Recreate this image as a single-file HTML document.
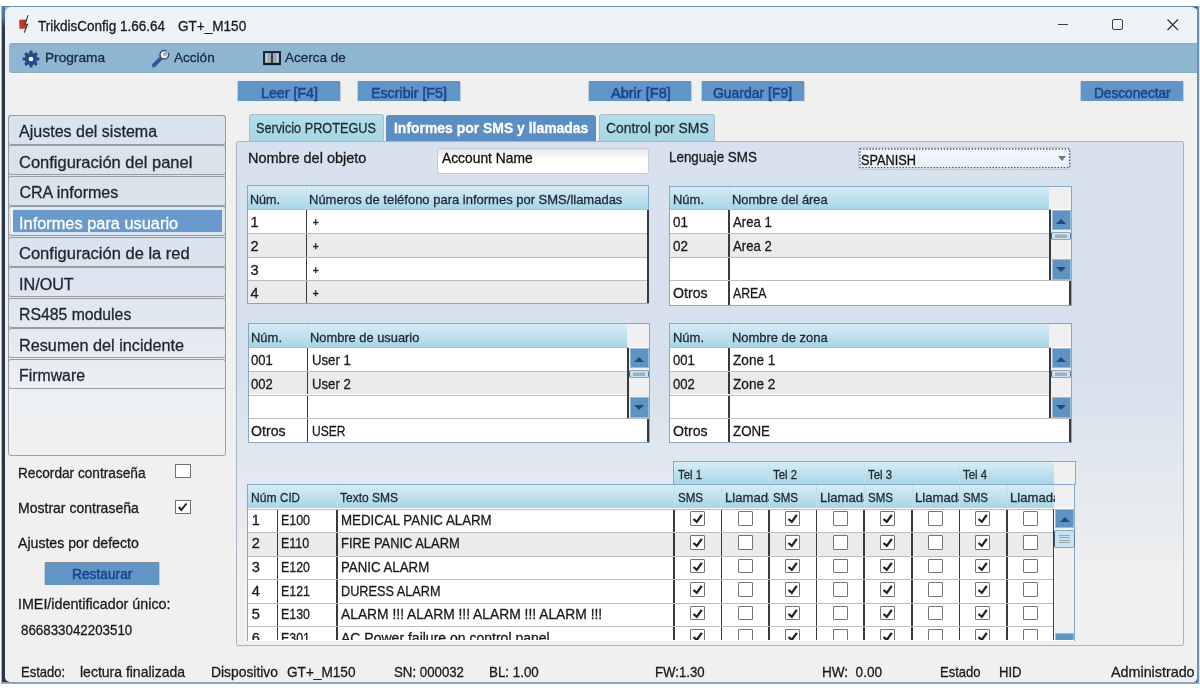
<!DOCTYPE html><html><head><meta charset="utf-8"><style>
html,body{margin:0;padding:0;background:#fff;width:1200px;height:688px;overflow:hidden;}
body{position:relative;font-family:"Liberation Sans",sans-serif;}
.t{position:absolute;white-space:pre;-webkit-text-stroke:0.3px currentColor;}
.b{position:absolute;box-sizing:border-box;}
svg{position:absolute;overflow:visible;}
</style></head><body><div style="position:absolute;left:0;top:0;width:1200px;height:688px;overflow:hidden;filter:blur(0.4px);">
<div class="b" style="left:2.00px;top:6.00px;width:1197.00px;height:678.00px;background:#f0f0f0;"></div>
<div class="b" style="left:5.00px;top:7.00px;width:8.00px;height:8.00px;background:#86b4dc;"></div>
<div class="b" style="left:1190.00px;top:7.00px;width:7.50px;height:7.00px;background:#34475a;"></div>
<div class="b" style="left:5.00px;top:7.00px;width:1192.50px;height:36.50px;background:#eef3f8;border-radius:6px 6px 0 0;"></div>
<div class="b" style="left:2.00px;top:6.00px;width:1197.00px;height:1.00px;background:#6f8fb0;"></div>
<div class="b" style="left:1.00px;top:6.00px;width:1.20px;height:678.00px;background:#9fb6cc;"></div>
<div class="b" style="left:2.00px;top:6.00px;width:3.00px;height:678.00px;background:linear-gradient(#4f7fb0 0px,#4a74a0 12px,#2a3a4e 22px,#27364a 100%);"></div>
<div class="b" style="left:1197.30px;top:6.00px;width:1.30px;height:678.00px;background:#7090b0;"></div>
<div class="b" style="left:1198.60px;top:6.00px;width:1.00px;height:678.00px;background:#cfe6f6;"></div>
<div class="b" style="left:5.00px;top:675.00px;width:6.00px;height:6.60px;background:#27364a;"></div>
<div class="b" style="left:5.00px;top:660.00px;width:35.00px;height:21.60px;background:#f0f0f0;border-radius:0 0 0 5px;"></div>
<div class="b" style="left:1191.00px;top:676.00px;width:6.30px;height:5.60px;background:#34475a;"></div>
<div class="b" style="left:1150.00px;top:660.00px;width:47.30px;height:21.60px;background:#f0f0f0;border-radius:0 0 4px 0;"></div>
<div class="b" style="left:2.00px;top:681.60px;width:1197.00px;height:2.00px;background:#86a6c2;"></div>
<svg style="left:0;top:0" width="40" height="40" viewBox="0 0 40 40"><path d="M19.2 19.8 L26.8 19.6 L25.5 24 L27 24 L25.8 28.8 L19.4 28.8 Z" fill="#c4372d"/><path d="M28 15.2 L25.2 24.2 L27.6 24.2 L24.2 32.8" stroke="#3a3a3a" stroke-width="1.1" fill="none"/></svg>
<div class="t" style="left:38.10px;top:17.73px;font-size:14.00px;line-height:16.09px;color:#1a1a1a;font-weight:normal;transform:scaleX(0.9646);transform-origin:0 0;">TrikdisConfig 1.66.64</div>
<div class="t" style="left:178.30px;top:17.73px;font-size:14.00px;line-height:16.09px;color:#1a1a1a;font-weight:normal;transform:scaleX(0.9685);transform-origin:0 0;">GT+_M150</div>
<div class="b" style="left:1058.00px;top:23.60px;width:10.00px;height:1.20px;background:#3c3c3c;"></div>
<div class="b" style="left:1112.00px;top:19.00px;width:11.00px;height:11.00px;border:1.4px solid #3c3c3c;border-radius:2px;"></div>
<svg style="left:1167px;top:19px" width="12" height="12"><path d="M0.5 0.5 L11 11 M11 0.5 L0.5 11" stroke="#333" stroke-width="1.2"/></svg>
<div class="b" style="left:8.50px;top:43.20px;width:1188.50px;height:29.50px;background:#8fb6d0;border-top:1px solid #86abc4;border-bottom:1px solid #88acc4;border-radius:3px 0 0 3px;"></div>
<div class="b" style="left:5.00px;top:72.70px;width:1192.00px;height:1.30px;background:#f3f5f8;"></div>
<svg style="left:21.8px;top:49.7px" width="18" height="18" viewBox="0 0 18 18"><g fill="#27498a"><circle cx="9" cy="9" r="6.2"/><rect x="7.4" y="0.6" width="3.2" height="4" rx="0.8" transform="rotate(0 9 9)"/><rect x="7.4" y="0.6" width="3.2" height="4" rx="0.8" transform="rotate(45 9 9)"/><rect x="7.4" y="0.6" width="3.2" height="4" rx="0.8" transform="rotate(90 9 9)"/><rect x="7.4" y="0.6" width="3.2" height="4" rx="0.8" transform="rotate(135 9 9)"/><rect x="7.4" y="0.6" width="3.2" height="4" rx="0.8" transform="rotate(180 9 9)"/><rect x="7.4" y="0.6" width="3.2" height="4" rx="0.8" transform="rotate(225 9 9)"/><rect x="7.4" y="0.6" width="3.2" height="4" rx="0.8" transform="rotate(270 9 9)"/><rect x="7.4" y="0.6" width="3.2" height="4" rx="0.8" transform="rotate(315 9 9)"/></g><circle cx="9" cy="9" r="2.3" fill="#fff"/></svg>
<div class="t" style="left:44.60px;top:50.28px;font-size:13.50px;line-height:15.51px;color:#1a2945;font-weight:normal;transform:scaleX(1.0123);transform-origin:0 0;">Programa</div>
<svg style="left:148px;top:46px" width="30" height="24" viewBox="0 0 30 24"><path d="M5.8 19.3 L12.8 12.3" stroke="#2c5aa0" stroke-width="4" stroke-linecap="round"/><circle cx="16.3" cy="8.8" r="4.3" fill="#f4f6f8" stroke="#3b4d60" stroke-width="1.5"/><circle cx="16.8" cy="8.3" r="1.9" fill="#8fb6d0"/><path d="M17 8 L21.5 3.5" stroke="#8fb6d0" stroke-width="3"/></svg>
<div class="t" style="left:174.30px;top:50.28px;font-size:13.50px;line-height:15.51px;color:#1a2945;font-weight:normal;transform:scaleX(1.0045);transform-origin:0 0;">Acción</div>
<svg style="left:258px;top:46px" width="30" height="24" viewBox="0 0 30 24"><rect x="6" y="6" width="16" height="12" fill="#9aa8b0" stroke="#1c2836" stroke-width="2"/><path d="M8.5 8 L8.5 16 M19.5 8 L19.5 16" stroke="#c9d2d8" stroke-width="1.6"/><path d="M14 7 L14 17.5" stroke="#1c2836" stroke-width="1.6"/><path d="M5.5 18 L22.5 18" stroke="#141c26" stroke-width="2.2"/></svg>
<div class="t" style="left:285.00px;top:50.28px;font-size:13.50px;line-height:15.51px;color:#1a2945;font-weight:normal;transform:scaleX(0.9987);transform-origin:0 0;">Acerca de</div>
<div class="b" style="left:237.00px;top:81.00px;width:104.00px;height:21.00px;background:#6095c6;border-top:1.4px solid #7f8c99;border-left:1.2px solid #c4ccd4;border-right:1px solid #c0ccd8;border-bottom:1px solid #e8f0f8;border-radius:2px 2px 0 0;"></div>
<div class="t" style="left:260.50px;top:84.65px;font-size:14.20px;line-height:16.32px;color:#1c4290;font-weight:normal;-webkit-text-stroke:0.5px #1c4290;transform:scaleX(1.0031);transform-origin:0 0;">Leer [F4]</div>
<div class="b" style="left:357.00px;top:81.00px;width:104.00px;height:21.00px;background:#6095c6;border-top:1.4px solid #7f8c99;border-left:1.2px solid #c4ccd4;border-right:1px solid #c0ccd8;border-bottom:1px solid #e8f0f8;border-radius:2px 2px 0 0;"></div>
<div class="t" style="left:370.70px;top:84.65px;font-size:14.20px;line-height:16.32px;color:#1c4290;font-weight:normal;-webkit-text-stroke:0.5px #1c4290;transform:scaleX(1.0034);transform-origin:0 0;">Escribir [F5]</div>
<div class="b" style="left:588.00px;top:81.00px;width:104.00px;height:21.00px;background:#6095c6;border-top:1.4px solid #7f8c99;border-left:1.2px solid #c4ccd4;border-right:1px solid #c0ccd8;border-bottom:1px solid #e8f0f8;border-radius:2px 2px 0 0;"></div>
<div class="t" style="left:610.60px;top:84.65px;font-size:14.20px;line-height:16.32px;color:#1c4290;font-weight:normal;-webkit-text-stroke:0.5px #1c4290;transform:scaleX(1.0242);transform-origin:0 0;">Abrir [F8]</div>
<div class="b" style="left:701.00px;top:81.00px;width:104.00px;height:21.00px;background:#6095c6;border-top:1.4px solid #7f8c99;border-left:1.2px solid #c4ccd4;border-right:1px solid #c0ccd8;border-bottom:1px solid #e8f0f8;border-radius:2px 2px 0 0;"></div>
<div class="t" style="left:713.30px;top:84.65px;font-size:14.20px;line-height:16.32px;color:#1c4290;font-weight:normal;-webkit-text-stroke:0.5px #1c4290;transform:scaleX(0.9840);transform-origin:0 0;">Guardar [F9]</div>
<div class="b" style="left:1080.00px;top:81.00px;width:104.00px;height:21.00px;background:#6095c6;border-top:1.4px solid #7f8c99;border-left:1.2px solid #c4ccd4;border-right:1px solid #c0ccd8;border-bottom:1px solid #e8f0f8;border-radius:2px 2px 0 0;"></div>
<div class="t" style="left:1094.20px;top:84.65px;font-size:14.20px;line-height:16.32px;color:#1c4290;font-weight:normal;-webkit-text-stroke:0.5px #1c4290;transform:scaleX(0.9622);transform-origin:0 0;">Desconectar</div>
<div class="b" style="left:7.80px;top:115.00px;width:218.20px;height:340.80px;border:1.6px solid #a0a0a0;border-radius:3px;background:linear-gradient(#d9e3ee 0px,#dae3ee 150px,#eceff3 270px,#f0f0f0 340px);"></div>
<div class="b" style="left:7.80px;top:114.70px;width:218.20px;height:30.20px;border:1.8px solid #9c9c9c;border-radius:3px;"></div>
<div class="t" style="left:19.40px;top:122.07px;font-size:16.05px;line-height:18.44px;color:#1e2530;font-weight:normal;transform:scaleX(0.9996);transform-origin:0 0;">Ajustes del sistema</div>
<div class="b" style="left:7.80px;top:145.20px;width:218.20px;height:30.20px;border:1.8px solid #9c9c9c;border-radius:3px;"></div>
<div class="t" style="left:19.40px;top:152.57px;font-size:16.05px;line-height:18.44px;color:#1e2530;font-weight:normal;transform:scaleX(1.0289);transform-origin:0 0;">Configuración del panel</div>
<div class="b" style="left:7.80px;top:175.70px;width:218.20px;height:30.20px;border:1.8px solid #9c9c9c;border-radius:3px;"></div>
<div class="t" style="left:19.40px;top:183.07px;font-size:16.05px;line-height:18.44px;color:#1e2530;font-weight:normal;transform:scaleX(1.0000);transform-origin:0 0;">CRA informes</div>
<div class="b" style="left:7.80px;top:206.20px;width:218.20px;height:30.20px;border:1.8px solid #9c9c9c;border-radius:3px;"></div>
<div class="b" style="left:10.50px;top:208.10px;width:212.50px;height:26.00px;border:1px solid #e4ebf3;border-left:2px solid #eef3f8;"></div>
<div class="b" style="left:12.50px;top:209.50px;width:209.00px;height:22.70px;background:#6a9acb;"></div>
<div class="t" style="left:19.40px;top:213.57px;font-size:16.05px;line-height:18.44px;color:#ffffff;font-weight:normal;transform:scaleX(1.0205);transform-origin:0 0;">Informes para usuario</div>
<div class="b" style="left:7.80px;top:236.70px;width:218.20px;height:30.20px;border:1.8px solid #9c9c9c;border-radius:3px;"></div>
<div class="t" style="left:19.40px;top:244.07px;font-size:16.05px;line-height:18.44px;color:#1e2530;font-weight:normal;transform:scaleX(1.0299);transform-origin:0 0;">Configuración de la red</div>
<div class="b" style="left:7.80px;top:267.20px;width:218.20px;height:30.20px;border:1.8px solid #9c9c9c;border-radius:3px;"></div>
<div class="t" style="left:19.40px;top:274.57px;font-size:16.05px;line-height:18.44px;color:#1e2530;font-weight:normal;transform:scaleX(1.0076);transform-origin:0 0;">IN/OUT</div>
<div class="b" style="left:7.80px;top:297.70px;width:218.20px;height:30.20px;border:1.8px solid #9c9c9c;border-radius:3px;"></div>
<div class="t" style="left:19.40px;top:305.07px;font-size:16.05px;line-height:18.44px;color:#1e2530;font-weight:normal;transform:scaleX(0.9843);transform-origin:0 0;">RS485 modules</div>
<div class="b" style="left:7.80px;top:328.20px;width:218.20px;height:30.20px;border:1.8px solid #9c9c9c;border-radius:3px;"></div>
<div class="t" style="left:19.40px;top:335.57px;font-size:16.05px;line-height:18.44px;color:#1e2530;font-weight:normal;transform:scaleX(1.0125);transform-origin:0 0;">Resumen del incidente</div>
<div class="b" style="left:7.80px;top:358.70px;width:218.20px;height:30.20px;border:1.8px solid #9c9c9c;border-radius:3px;"></div>
<div class="t" style="left:19.40px;top:366.07px;font-size:16.05px;line-height:18.44px;color:#1e2530;font-weight:normal;transform:scaleX(0.9885);transform-origin:0 0;">Firmware</div>
<div class="t" style="left:17.50px;top:464.56px;font-size:14.30px;line-height:16.43px;color:#1a1a1a;font-weight:normal;transform:scaleX(0.9549);transform-origin:0 0;">Recordar contraseña</div>
<div class="b" style="left:174.50px;top:464.00px;width:16.00px;height:14.00px;background:#fff;border:1.3px solid #707070;"></div>
<div class="t" style="left:17.50px;top:500.36px;font-size:14.30px;line-height:16.43px;color:#1a1a1a;font-weight:normal;transform:scaleX(0.9807);transform-origin:0 0;">Mostrar contraseña</div>
<div class="b" style="left:174.50px;top:499.50px;width:16.00px;height:14.00px;background:#fff;border:1.3px solid #707070;"></div>
<svg style="left:175px;top:499.5px" width="15" height="14"><path d="M3.8 7 L6.3 10 L11.5 3.5" stroke="#222" stroke-width="2" fill="none"/></svg>
<div class="t" style="left:17.50px;top:534.56px;font-size:14.30px;line-height:16.43px;color:#1a1a1a;font-weight:normal;transform:scaleX(0.9869);transform-origin:0 0;">Ajustes por defecto</div>
<div class="b" style="left:43.80px;top:562.20px;width:116.20px;height:24.10px;background:#6095c6;border-top:1.4px solid #7f8c99;border-left:1.2px solid #c4ccd4;border-right:1px solid #c0ccd8;border-bottom:1px solid #e8f0f8;border-radius:2px 2px 0 0;"></div>
<div class="t" style="left:71.90px;top:566.45px;font-size:14.20px;line-height:16.32px;color:#1c4290;font-weight:normal;-webkit-text-stroke:0.5px #1c4290;transform:scaleX(0.9688);transform-origin:0 0;">Restaurar</div>
<div class="t" style="left:17.50px;top:595.99px;font-size:14.60px;line-height:16.78px;color:#1a1a1a;font-weight:normal;transform:scaleX(0.9788);transform-origin:0 0;">IMEI/identificador único:</div>
<div class="t" style="left:20.50px;top:620.72px;font-size:15.00px;line-height:17.23px;color:#1a1a1a;font-weight:normal;transform:scaleX(0.8887);transform-origin:0 0;">866833042203510</div>
<div class="t" style="left:20.80px;top:663.91px;font-size:14.80px;line-height:17.01px;color:#1a1a1a;font-weight:normal;transform:scaleX(0.8807);transform-origin:0 0;">Estado:</div>
<div class="t" style="left:80.00px;top:663.91px;font-size:14.80px;line-height:17.01px;color:#1a1a1a;font-weight:normal;transform:scaleX(0.9455);transform-origin:0 0;">lectura finalizada</div>
<div class="t" style="left:210.50px;top:663.91px;font-size:14.80px;line-height:17.01px;color:#1a1a1a;font-weight:normal;transform:scaleX(0.9363);transform-origin:0 0;">Dispositivo</div>
<div class="t" style="left:287.00px;top:663.91px;font-size:14.80px;line-height:17.01px;color:#1a1a1a;font-weight:normal;transform:scaleX(0.9202);transform-origin:0 0;">GT+_M150</div>
<div class="t" style="left:393.70px;top:663.91px;font-size:14.80px;line-height:17.01px;color:#1a1a1a;font-weight:normal;transform:scaleX(0.8955);transform-origin:0 0;">SN: 000032</div>
<div class="t" style="left:488.90px;top:663.91px;font-size:14.80px;line-height:17.01px;color:#1a1a1a;font-weight:normal;transform:scaleX(0.9034);transform-origin:0 0;">BL: 1.00</div>
<div class="t" style="left:655.00px;top:663.91px;font-size:14.80px;line-height:17.01px;color:#1a1a1a;font-weight:normal;transform:scaleX(0.8912);transform-origin:0 0;">FW:1.30</div>
<div class="t" style="left:821.70px;top:663.91px;font-size:14.80px;line-height:17.01px;color:#1a1a1a;font-weight:normal;transform:scaleX(0.9157);transform-origin:0 0;">HW:  0.00</div>
<div class="t" style="left:940.30px;top:663.91px;font-size:14.80px;line-height:17.01px;color:#1a1a1a;font-weight:normal;transform:scaleX(0.8790);transform-origin:0 0;">Estado</div>
<div class="t" style="left:999.00px;top:663.91px;font-size:14.80px;line-height:17.01px;color:#1a1a1a;font-weight:normal;transform:scaleX(0.8867);transform-origin:0 0;">HID</div>
<div class="t" style="left:1111.40px;top:663.91px;font-size:14.80px;line-height:17.01px;color:#1a1a1a;font-weight:normal;transform:scaleX(0.9680);transform-origin:0 0;">Administrado</div>
<div class="b" style="left:236.00px;top:140.50px;width:948.00px;height:505.50px;border:1px solid #aab4c0;border-radius:2px;background:linear-gradient(#d8e2ee 0px,#d6e1ed 230px,#f0f0f0 440px);"></div>
<div class="b" style="left:249.00px;top:113.80px;width:135.00px;height:26.80px;background:linear-gradient(#b4dde9,#a8d6e5);border:1px solid #b0bcc6;border-bottom:none;border-radius:3px 3px 0 0;"></div>
<div class="t" style="left:256.00px;top:119.91px;font-size:14.80px;line-height:17.01px;color:#1e2a38;font-weight:normal;transform:scaleX(0.8583);transform-origin:0 0;">Servicio PROTEGUS</div>
<div class="b" style="left:385.60px;top:115.00px;width:210.40px;height:26.00px;background:#5b8fc4;border-radius:3px 3px 0 0;border-top:1px solid #7790a8;"></div>
<div class="t" style="left:394.00px;top:120.36px;font-size:14.30px;line-height:16.43px;color:#ffffff;font-weight:bold;transform:scaleX(0.9741);transform-origin:0 0;">Informes por SMS y llamadas</div>
<div class="b" style="left:599.00px;top:113.80px;width:116.00px;height:26.80px;background:linear-gradient(#b4dde9,#a8d6e5);border:1px solid #b0bcc6;border-bottom:none;border-radius:3px 3px 0 0;"></div>
<div class="t" style="left:605.70px;top:119.91px;font-size:14.80px;line-height:17.01px;color:#1e2a38;font-weight:normal;transform:scaleX(0.9388);transform-origin:0 0;">Control por SMS</div>
<div class="t" style="left:247.50px;top:149.56px;font-size:14.30px;line-height:16.43px;color:#1a1a1a;font-weight:normal;transform:scaleX(1.0133);transform-origin:0 0;">Nombre del objeto</div>
<div class="b" style="left:437.00px;top:148.00px;width:211.50px;height:25.50px;background:linear-gradient(#e4e4e4,#fff 45%);border:1px solid #c8ccd2;border-radius:2px;"></div>
<div class="t" style="left:441.90px;top:149.86px;font-size:14.30px;line-height:16.43px;color:#111;font-weight:normal;transform:scaleX(0.9661);transform-origin:0 0;">Account Name</div>
<div class="t" style="left:668.70px;top:148.56px;font-size:14.30px;line-height:16.43px;color:#1a1a1a;font-weight:normal;transform:scaleX(0.9371);transform-origin:0 0;">Lenguaje SMS</div>
<div class="b" style="left:857.50px;top:147.00px;width:213.50px;height:22.70px;border:1px solid #b8cce0;border-radius:3px;"></div>
<div class="b" style="left:858.50px;top:148.00px;width:211.50px;height:20.70px;background:linear-gradient(#f4f8fc,#e6eef7);border-radius:2px;"></div>
<svg style="left:858.5px;top:148px" width="211.5" height="20.7"><rect x="1" y="1" width="209.5" height="18.7" fill="none" stroke="#555" stroke-width="1.3" stroke-dasharray="1.5 1.6"/></svg>
<div class="t" style="left:860.50px;top:151.88px;font-size:14.50px;line-height:16.66px;color:#111;font-weight:normal;transform:scaleX(0.8788);transform-origin:0 0;">SPANISH</div>
<svg style="left:1058px;top:155.5px" width="9" height="6"><path d="M0 0 L8 0 L4 5 Z" fill="#777"/></svg>
<div class="b" style="left:246.80px;top:185.30px;width:402.70px;height:118.90px;background:#fff;border:1px solid #86a9c8;"></div>
<div class="b" style="left:247.80px;top:186.30px;width:400.70px;height:22.90px;background:linear-gradient(#d6edf5,#a8d5e5);"></div>
<div class="t" style="left:250.30px;top:192.80px;font-size:12.60px;line-height:14.48px;color:#1e2838;font-weight:normal;transform:scaleX(0.9966);transform-origin:0 0;">Núm.</div>
<div class="t" style="left:309.20px;top:192.80px;font-size:12.60px;line-height:14.48px;color:#1e2838;font-weight:normal;transform:scaleX(1.0315);transform-origin:0 0;">Números de teléfono para informes por SMS/llamadas</div>
<div class="b" style="left:306.20px;top:186.30px;width:1.00px;height:22.90px;background:#c2e0ea;"></div>
<div class="b" style="left:247.80px;top:209.20px;width:400.70px;height:24.10px;background:#ffffff;border-top:1.5px solid #bdbdbd;"></div>
<div class="b" style="left:305.70px;top:210.20px;width:1.50px;height:23.10px;background:#3a3a3a;"></div>
<div class="t" style="left:250.60px;top:213.99px;font-size:14.60px;line-height:16.78px;color:#1a1a1a;font-weight:normal;">1</div>
<div class="t" style="left:312.70px;top:217.35px;font-size:10.00px;line-height:11.49px;color:#1a1a1a;font-weight:normal;-webkit-text-stroke:0.5px #222;">+</div>
<div class="b" style="left:247.80px;top:233.30px;width:400.70px;height:23.50px;background:#ebebeb;border-top:1.5px solid #bdbdbd;"></div>
<div class="b" style="left:305.70px;top:234.30px;width:1.50px;height:22.50px;background:#3a3a3a;"></div>
<div class="t" style="left:250.60px;top:238.09px;font-size:14.60px;line-height:16.78px;color:#1a1a1a;font-weight:normal;">2</div>
<div class="t" style="left:312.70px;top:241.45px;font-size:10.00px;line-height:11.49px;color:#1a1a1a;font-weight:normal;-webkit-text-stroke:0.5px #222;">+</div>
<div class="b" style="left:247.80px;top:256.80px;width:400.70px;height:23.50px;background:#ffffff;border-top:1.5px solid #bdbdbd;"></div>
<div class="b" style="left:305.70px;top:257.80px;width:1.50px;height:22.50px;background:#3a3a3a;"></div>
<div class="t" style="left:250.60px;top:261.59px;font-size:14.60px;line-height:16.78px;color:#1a1a1a;font-weight:normal;">3</div>
<div class="t" style="left:312.70px;top:264.95px;font-size:10.00px;line-height:11.49px;color:#1a1a1a;font-weight:normal;-webkit-text-stroke:0.5px #222;">+</div>
<div class="b" style="left:247.80px;top:280.30px;width:400.70px;height:22.90px;background:#ebebeb;border-top:1.5px solid #bdbdbd;"></div>
<div class="b" style="left:305.70px;top:281.30px;width:1.50px;height:21.90px;background:#3a3a3a;"></div>
<div class="t" style="left:250.60px;top:285.09px;font-size:14.60px;line-height:16.78px;color:#1a1a1a;font-weight:normal;">4</div>
<div class="t" style="left:312.70px;top:288.45px;font-size:10.00px;line-height:11.49px;color:#1a1a1a;font-weight:normal;-webkit-text-stroke:0.5px #222;">+</div>
<div class="b" style="left:647.00px;top:210.20px;width:1.50px;height:93.00px;background:#3a3a3a;"></div>
<div class="b" style="left:669.00px;top:185.50px;width:402.50px;height:120.10px;background:#fff;border:1px solid #86a9c8;"></div>
<div class="b" style="left:670.00px;top:186.50px;width:378.50px;height:22.90px;background:linear-gradient(#d6edf5,#a8d5e5);"></div>
<div class="b" style="left:1048.50px;top:186.50px;width:22.00px;height:22.90px;background:#f0f0f0;"></div>
<div class="t" style="left:672.50px;top:193.00px;font-size:12.60px;line-height:14.48px;color:#1e2838;font-weight:normal;transform:scaleX(1.0298);transform-origin:0 0;">Núm.</div>
<div class="t" style="left:731.70px;top:193.00px;font-size:12.60px;line-height:14.48px;color:#1e2838;font-weight:normal;transform:scaleX(1.0198);transform-origin:0 0;">Nombre del área</div>
<div class="b" style="left:728.70px;top:186.50px;width:1.00px;height:22.90px;background:#c2e0ea;"></div>
<div class="b" style="left:670.00px;top:209.40px;width:380.50px;height:23.90px;background:#ffffff;border-top:1.5px solid #bdbdbd;"></div>
<div class="b" style="left:728.20px;top:210.40px;width:1.50px;height:22.90px;background:#3a3a3a;"></div>
<div class="t" style="left:672.80px;top:214.19px;font-size:14.60px;line-height:16.78px;color:#1a1a1a;font-weight:normal;transform:scaleX(0.9238);transform-origin:0 0;">01</div>
<div class="t" style="left:733.00px;top:214.19px;font-size:14.60px;line-height:16.78px;color:#1a1a1a;font-weight:normal;transform:scaleX(0.8997);transform-origin:0 0;">Area 1</div>
<div class="b" style="left:670.00px;top:233.30px;width:380.50px;height:23.50px;background:#ebebeb;border-top:1.5px solid #bdbdbd;"></div>
<div class="b" style="left:728.20px;top:234.30px;width:1.50px;height:22.50px;background:#3a3a3a;"></div>
<div class="t" style="left:672.80px;top:238.09px;font-size:14.60px;line-height:16.78px;color:#1a1a1a;font-weight:normal;transform:scaleX(0.9238);transform-origin:0 0;">02</div>
<div class="t" style="left:733.00px;top:238.09px;font-size:14.60px;line-height:16.78px;color:#1a1a1a;font-weight:normal;transform:scaleX(0.8997);transform-origin:0 0;">Area 2</div>
<div class="b" style="left:670.00px;top:256.80px;width:380.50px;height:23.50px;background:#ffffff;border-top:1.5px solid #bdbdbd;"></div>
<div class="b" style="left:728.20px;top:257.80px;width:1.50px;height:22.50px;background:#3a3a3a;"></div>
<div class="b" style="left:670.00px;top:280.30px;width:400.50px;height:24.30px;background:#ffffff;border-top:1.5px solid #bdbdbd;"></div>
<div class="b" style="left:728.20px;top:281.30px;width:1.50px;height:23.30px;background:#3a3a3a;"></div>
<div class="t" style="left:672.80px;top:285.09px;font-size:14.60px;line-height:16.78px;color:#1a1a1a;font-weight:normal;transform:scaleX(0.9694);transform-origin:0 0;">Otros</div>
<div class="t" style="left:733.00px;top:285.09px;font-size:14.60px;line-height:16.78px;color:#1a1a1a;font-weight:normal;transform:scaleX(0.8375);transform-origin:0 0;">AREA</div>
<div class="b" style="left:1049.00px;top:210.40px;width:1.50px;height:69.90px;background:#3a3a3a;"></div>
<div class="b" style="left:1069.00px;top:281.30px;width:1.50px;height:23.30px;background:#3a3a3a;"></div>
<div class="b" style="left:247.50px;top:323.40px;width:402.00px;height:119.40px;background:#fff;border:1px solid #86a9c8;"></div>
<div class="b" style="left:248.50px;top:324.40px;width:378.00px;height:22.90px;background:linear-gradient(#d6edf5,#a8d5e5);"></div>
<div class="b" style="left:626.50px;top:324.40px;width:22.00px;height:22.90px;background:#f0f0f0;"></div>
<div class="t" style="left:251.00px;top:330.90px;font-size:12.60px;line-height:14.48px;color:#1e2838;font-weight:normal;transform:scaleX(1.0298);transform-origin:0 0;">Núm.</div>
<div class="t" style="left:310.20px;top:330.90px;font-size:12.60px;line-height:14.48px;color:#1e2838;font-weight:normal;transform:scaleX(1.0210);transform-origin:0 0;">Nombre de usuario</div>
<div class="b" style="left:307.20px;top:324.40px;width:1.00px;height:22.90px;background:#c2e0ea;"></div>
<div class="b" style="left:248.50px;top:347.30px;width:380.00px;height:23.60px;background:#ffffff;border-top:1.5px solid #bdbdbd;"></div>
<div class="b" style="left:306.70px;top:348.30px;width:1.50px;height:22.60px;background:#3a3a3a;"></div>
<div class="t" style="left:251.30px;top:352.09px;font-size:14.60px;line-height:16.78px;color:#1a1a1a;font-weight:normal;transform:scaleX(0.8950);transform-origin:0 0;">001</div>
<div class="t" style="left:311.50px;top:352.09px;font-size:14.60px;line-height:16.78px;color:#1a1a1a;font-weight:normal;transform:scaleX(0.9023);transform-origin:0 0;">User 1</div>
<div class="b" style="left:248.50px;top:370.90px;width:380.00px;height:23.60px;background:#ebebeb;border-top:1.5px solid #bdbdbd;"></div>
<div class="b" style="left:306.70px;top:371.90px;width:1.50px;height:22.60px;background:#3a3a3a;"></div>
<div class="t" style="left:251.30px;top:375.69px;font-size:14.60px;line-height:16.78px;color:#1a1a1a;font-weight:normal;transform:scaleX(0.8950);transform-origin:0 0;">002</div>
<div class="t" style="left:311.50px;top:375.69px;font-size:14.60px;line-height:16.78px;color:#1a1a1a;font-weight:normal;transform:scaleX(0.9023);transform-origin:0 0;">User 2</div>
<div class="b" style="left:248.50px;top:394.50px;width:380.00px;height:23.70px;background:#ffffff;border-top:1.5px solid #bdbdbd;"></div>
<div class="b" style="left:306.70px;top:395.50px;width:1.50px;height:22.70px;background:#3a3a3a;"></div>
<div class="b" style="left:248.50px;top:418.20px;width:400.00px;height:23.60px;background:#ffffff;border-top:1.5px solid #bdbdbd;"></div>
<div class="b" style="left:306.70px;top:419.20px;width:1.50px;height:22.60px;background:#3a3a3a;"></div>
<div class="t" style="left:251.30px;top:422.99px;font-size:14.60px;line-height:16.78px;color:#1a1a1a;font-weight:normal;transform:scaleX(0.9694);transform-origin:0 0;">Otros</div>
<div class="t" style="left:311.50px;top:422.99px;font-size:14.60px;line-height:16.78px;color:#1a1a1a;font-weight:normal;transform:scaleX(0.8234);transform-origin:0 0;">USER</div>
<div class="b" style="left:627.00px;top:348.30px;width:1.50px;height:69.90px;background:#3a3a3a;"></div>
<div class="b" style="left:647.00px;top:419.20px;width:1.50px;height:22.60px;background:#3a3a3a;"></div>
<div class="b" style="left:669.00px;top:323.40px;width:402.50px;height:119.40px;background:#fff;border:1px solid #86a9c8;"></div>
<div class="b" style="left:670.00px;top:324.40px;width:378.50px;height:22.90px;background:linear-gradient(#d6edf5,#a8d5e5);"></div>
<div class="b" style="left:1048.50px;top:324.40px;width:22.00px;height:22.90px;background:#f0f0f0;"></div>
<div class="t" style="left:672.50px;top:330.90px;font-size:12.60px;line-height:14.48px;color:#1e2838;font-weight:normal;transform:scaleX(1.0298);transform-origin:0 0;">Núm.</div>
<div class="t" style="left:731.90px;top:330.90px;font-size:12.60px;line-height:14.48px;color:#1e2838;font-weight:normal;transform:scaleX(1.0274);transform-origin:0 0;">Nombre de zona</div>
<div class="b" style="left:728.90px;top:324.40px;width:1.00px;height:22.90px;background:#c2e0ea;"></div>
<div class="b" style="left:670.00px;top:347.30px;width:380.50px;height:23.60px;background:#ffffff;border-top:1.5px solid #bdbdbd;"></div>
<div class="b" style="left:728.40px;top:348.30px;width:1.50px;height:22.60px;background:#3a3a3a;"></div>
<div class="t" style="left:672.80px;top:352.09px;font-size:14.60px;line-height:16.78px;color:#1a1a1a;font-weight:normal;transform:scaleX(0.8950);transform-origin:0 0;">001</div>
<div class="t" style="left:733.20px;top:352.09px;font-size:14.60px;line-height:16.78px;color:#1a1a1a;font-weight:normal;transform:scaleX(0.9329);transform-origin:0 0;">Zone 1</div>
<div class="b" style="left:670.00px;top:370.90px;width:380.50px;height:23.60px;background:#ebebeb;border-top:1.5px solid #bdbdbd;"></div>
<div class="b" style="left:728.40px;top:371.90px;width:1.50px;height:22.60px;background:#3a3a3a;"></div>
<div class="t" style="left:672.80px;top:375.69px;font-size:14.60px;line-height:16.78px;color:#1a1a1a;font-weight:normal;transform:scaleX(0.8950);transform-origin:0 0;">002</div>
<div class="t" style="left:733.20px;top:375.69px;font-size:14.60px;line-height:16.78px;color:#1a1a1a;font-weight:normal;transform:scaleX(0.9329);transform-origin:0 0;">Zone 2</div>
<div class="b" style="left:670.00px;top:394.50px;width:380.50px;height:23.70px;background:#ffffff;border-top:1.5px solid #bdbdbd;"></div>
<div class="b" style="left:728.40px;top:395.50px;width:1.50px;height:22.70px;background:#3a3a3a;"></div>
<div class="b" style="left:670.00px;top:418.20px;width:400.50px;height:23.60px;background:#ffffff;border-top:1.5px solid #bdbdbd;"></div>
<div class="b" style="left:728.40px;top:419.20px;width:1.50px;height:22.60px;background:#3a3a3a;"></div>
<div class="t" style="left:672.80px;top:422.99px;font-size:14.60px;line-height:16.78px;color:#1a1a1a;font-weight:normal;transform:scaleX(0.9694);transform-origin:0 0;">Otros</div>
<div class="t" style="left:733.20px;top:422.99px;font-size:14.60px;line-height:16.78px;color:#1a1a1a;font-weight:normal;transform:scaleX(0.9123);transform-origin:0 0;">ZONE</div>
<div class="b" style="left:1049.00px;top:348.30px;width:1.50px;height:69.90px;background:#3a3a3a;"></div>
<div class="b" style="left:1069.00px;top:419.20px;width:1.50px;height:22.60px;background:#3a3a3a;"></div>
<div class="b" style="left:1050.50px;top:210.20px;width:20.00px;height:69.40px;background:#f0f0f0;"></div>
<div class="b" style="left:1051.50px;top:210.20px;width:19.00px;height:20.00px;background:#5f93c4;border:1px solid #9dbcd8;"></div>
<svg style="left:1056.00px;top:218.70px" width="10" height="5"><path d="M0 5 L5 0 L10 5 Z" fill="#2b4874"/></svg>
<div class="b" style="left:1050.50px;top:232.30px;width:20.50px;height:7.70px;background:#c9e2f2;border:1px solid #86a8c8;border-left:1.5px solid #3d5f86;border-right:1.5px solid #5d7fa6;border-radius:2px;"></div>
<div class="b" style="left:1055.00px;top:234.30px;width:11.50px;height:3.70px;background:#a3aeb8;border-top:1px solid #c0c8cf;"></div>
<div class="b" style="left:1051.50px;top:259.10px;width:19.00px;height:20.50px;background:#5f93c4;border:1px solid #9dbcd8;"></div>
<svg style="left:1056.00px;top:267.35px" width="10" height="5"><path d="M0 0 L5 5 L10 0 Z" fill="#2b4874"/></svg>
<div class="b" style="left:628.50px;top:348.00px;width:20.00px;height:69.50px;background:#f0f0f0;"></div>
<div class="b" style="left:629.50px;top:348.00px;width:19.00px;height:20.00px;background:#5f93c4;border:1px solid #9dbcd8;"></div>
<svg style="left:634.00px;top:356.50px" width="10" height="5"><path d="M0 5 L5 0 L10 5 Z" fill="#2b4874"/></svg>
<div class="b" style="left:628.50px;top:370.30px;width:20.50px;height:7.70px;background:#c9e2f2;border:1px solid #86a8c8;border-left:1.5px solid #3d5f86;border-right:1.5px solid #5d7fa6;border-radius:2px;"></div>
<div class="b" style="left:633.00px;top:372.30px;width:11.50px;height:3.70px;background:#a3aeb8;border-top:1px solid #c0c8cf;"></div>
<div class="b" style="left:629.50px;top:397.00px;width:19.00px;height:20.50px;background:#5f93c4;border:1px solid #9dbcd8;"></div>
<svg style="left:634.00px;top:405.25px" width="10" height="5"><path d="M0 0 L5 5 L10 0 Z" fill="#2b4874"/></svg>
<div class="b" style="left:1050.50px;top:348.00px;width:20.00px;height:69.50px;background:#f0f0f0;"></div>
<div class="b" style="left:1051.50px;top:348.00px;width:19.00px;height:20.00px;background:#5f93c4;border:1px solid #9dbcd8;"></div>
<svg style="left:1056.00px;top:356.50px" width="10" height="5"><path d="M0 5 L5 0 L10 5 Z" fill="#2b4874"/></svg>
<div class="b" style="left:1050.50px;top:370.30px;width:20.50px;height:7.70px;background:#c9e2f2;border:1px solid #86a8c8;border-left:1.5px solid #3d5f86;border-right:1.5px solid #5d7fa6;border-radius:2px;"></div>
<div class="b" style="left:1055.00px;top:372.30px;width:11.50px;height:3.70px;background:#a3aeb8;border-top:1px solid #c0c8cf;"></div>
<div class="b" style="left:1051.50px;top:397.00px;width:19.00px;height:20.50px;background:#5f93c4;border:1px solid #9dbcd8;"></div>
<svg style="left:1056.00px;top:405.25px" width="10" height="5"><path d="M0 0 L5 5 L10 0 Z" fill="#2b4874"/></svg>
<div class="b" style="left:673.00px;top:460.80px;width:402.50px;height:24.20px;border:1px solid #86a9c8;border-bottom:none;background:#f0f0f0;"></div>
<div class="b" style="left:674.00px;top:461.80px;width:379.70px;height:22.70px;background:linear-gradient(#d6edf5,#a8d5e5);"></div>
<div class="t" style="left:677.80px;top:467.70px;font-size:12.60px;line-height:14.48px;color:#1e2838;font-weight:normal;transform:scaleX(0.9018);transform-origin:0 0;">Tel 1</div>
<div class="b" style="left:768.90px;top:461.80px;width:1.00px;height:22.50px;background:#c2e0ea;"></div>
<div class="t" style="left:772.90px;top:467.70px;font-size:12.60px;line-height:14.48px;color:#1e2838;font-weight:normal;transform:scaleX(0.9018);transform-origin:0 0;">Tel 2</div>
<div class="b" style="left:864.00px;top:461.80px;width:1.00px;height:22.50px;background:#c2e0ea;"></div>
<div class="t" style="left:868.00px;top:467.70px;font-size:12.60px;line-height:14.48px;color:#1e2838;font-weight:normal;transform:scaleX(0.9018);transform-origin:0 0;">Tel 3</div>
<div class="b" style="left:959.10px;top:461.80px;width:1.00px;height:22.50px;background:#c2e0ea;"></div>
<div class="t" style="left:963.10px;top:467.70px;font-size:12.60px;line-height:14.48px;color:#1e2838;font-weight:normal;transform:scaleX(0.9018);transform-origin:0 0;">Tel 4</div>
<div class="b" style="left:247.20px;top:484.30px;width:828.30px;height:156.70px;background:#fff;border:1px solid #86a9c8;border-bottom:none;"></div>
<div class="b" style="left:248.20px;top:485.30px;width:805.50px;height:23.20px;background:linear-gradient(#d6edf5,#a8d5e5);"></div>
<div class="b" style="left:673.00px;top:484.30px;width:402.50px;height:1.00px;background:#86a9c8;"></div>
<div class="b" style="left:1053.70px;top:485.30px;width:20.80px;height:23.20px;background:#f0f0f0;"></div>
<div class="t" style="left:250.90px;top:491.40px;font-size:12.60px;line-height:14.48px;color:#1e2838;font-weight:normal;transform:scaleX(0.9586);transform-origin:0 0;">Núm</div>
<div class="t" style="left:280.40px;top:491.40px;font-size:12.60px;line-height:14.48px;color:#1e2838;font-weight:normal;transform:scaleX(0.9217);transform-origin:0 0;">CID</div>
<div class="t" style="left:339.90px;top:491.40px;font-size:12.60px;line-height:14.48px;color:#1e2838;font-weight:normal;transform:scaleX(0.9521);transform-origin:0 0;">Texto SMS</div>
<div class="t" style="left:677.50px;top:491.40px;font-size:12.60px;line-height:14.48px;color:#1e2838;font-weight:normal;transform:scaleX(0.9156);transform-origin:0 0;">SMS</div>
<div class="b" style="left:722.85px;top:490px;width:45.05px;height:18px;overflow:hidden;"></div>
<div style="position:absolute;left:723.35px;top:488px;width:46.05px;height:18px;overflow:hidden;"><div class="t" style="left:1.5px;top:3.40px;font-size:12.6px;line-height:14.48px;color:#1e2838;transform:scaleX(1.0406);transform-origin:0 0;">Llamada</div></div>
<div class="t" style="left:772.60px;top:491.40px;font-size:12.60px;line-height:14.48px;color:#1e2838;font-weight:normal;transform:scaleX(0.9156);transform-origin:0 0;">SMS</div>
<div class="b" style="left:817.95px;top:490px;width:45.05px;height:18px;overflow:hidden;"></div>
<div style="position:absolute;left:818.45px;top:488px;width:46.05px;height:18px;overflow:hidden;"><div class="t" style="left:1.5px;top:3.40px;font-size:12.6px;line-height:14.48px;color:#1e2838;transform:scaleX(1.0406);transform-origin:0 0;">Llamada</div></div>
<div class="t" style="left:867.70px;top:491.40px;font-size:12.60px;line-height:14.48px;color:#1e2838;font-weight:normal;transform:scaleX(0.9156);transform-origin:0 0;">SMS</div>
<div class="b" style="left:913.05px;top:490px;width:45.05px;height:18px;overflow:hidden;"></div>
<div style="position:absolute;left:913.55px;top:488px;width:46.05px;height:18px;overflow:hidden;"><div class="t" style="left:1.5px;top:3.40px;font-size:12.6px;line-height:14.48px;color:#1e2838;transform:scaleX(1.0406);transform-origin:0 0;">Llamada</div></div>
<div class="t" style="left:962.80px;top:491.40px;font-size:12.60px;line-height:14.48px;color:#1e2838;font-weight:normal;transform:scaleX(0.9156);transform-origin:0 0;">SMS</div>
<div class="b" style="left:1008.15px;top:490px;width:45.05px;height:18px;overflow:hidden;"></div>
<div style="position:absolute;left:1008.65px;top:488px;width:46.05px;height:18px;overflow:hidden;"><div class="t" style="left:1.5px;top:3.40px;font-size:12.6px;line-height:14.48px;color:#1e2838;transform:scaleX(1.0406);transform-origin:0 0;">Llamada</div></div>
<div class="b" style="left:277.20px;top:485.30px;width:1.00px;height:23.20px;background:#c2e0ea;"></div>
<div class="b" style="left:336.70px;top:485.30px;width:1.00px;height:23.20px;background:#c2e0ea;"></div>
<div class="b" style="left:673.80px;top:485.30px;width:1.00px;height:23.20px;background:#c2e0ea;"></div>
<div class="b" style="left:721.35px;top:485.30px;width:1.00px;height:23.20px;background:#c2e0ea;"></div>
<div class="b" style="left:768.90px;top:485.30px;width:1.00px;height:23.20px;background:#c2e0ea;"></div>
<div class="b" style="left:816.45px;top:485.30px;width:1.00px;height:23.20px;background:#c2e0ea;"></div>
<div class="b" style="left:864.00px;top:485.30px;width:1.00px;height:23.20px;background:#c2e0ea;"></div>
<div class="b" style="left:911.55px;top:485.30px;width:1.00px;height:23.20px;background:#c2e0ea;"></div>
<div class="b" style="left:959.10px;top:485.30px;width:1.00px;height:23.20px;background:#c2e0ea;"></div>
<div class="b" style="left:1006.65px;top:485.30px;width:1.00px;height:23.20px;background:#c2e0ea;"></div>
<div class="b" style="left:248.2px;top:508.5px;width:805.50px;height:131.50px;overflow:hidden;">
<div class="b" style="left:0;top:0.00px;width:805.50px;height:23.55px;background:#ffffff;border-top:1.5px solid #bdbdbd;"></div>
<div class="b" style="left:28.50px;top:1.00px;width:1.5px;height:23.55px;background:#3a3a3a;"></div>
<div class="b" style="left:88.00px;top:1.00px;width:1.5px;height:23.55px;background:#3a3a3a;"></div>
<div class="b" style="left:425.10px;top:1.00px;width:1.5px;height:23.55px;background:#3a3a3a;"></div>
<div class="b" style="left:472.65px;top:1.00px;width:1.5px;height:23.55px;background:#3a3a3a;"></div>
<div class="b" style="left:520.20px;top:1.00px;width:1.5px;height:23.55px;background:#3a3a3a;"></div>
<div class="b" style="left:567.75px;top:1.00px;width:1.5px;height:23.55px;background:#3a3a3a;"></div>
<div class="b" style="left:615.30px;top:1.00px;width:1.5px;height:23.55px;background:#3a3a3a;"></div>
<div class="b" style="left:662.85px;top:1.00px;width:1.5px;height:23.55px;background:#3a3a3a;"></div>
<div class="b" style="left:710.40px;top:1.00px;width:1.5px;height:23.55px;background:#3a3a3a;"></div>
<div class="b" style="left:757.95px;top:1.00px;width:1.5px;height:23.55px;background:#3a3a3a;"></div>
<div class="b" style="left:805.50px;top:1.00px;width:1.5px;height:23.55px;background:#3a3a3a;"></div>
<div class="t" style="left:3.50px;top:3.39px;font-size:14.6px;line-height:16.78px;color:#1a1a1a;transform:scaleX(1.0000);transform-origin:0 0;">1</div>
<div class="t" style="left:33.00px;top:3.39px;font-size:14.6px;line-height:16.78px;color:#1a1a1a;transform:scaleX(0.8506);transform-origin:0 0;">E100</div>
<div class="t" style="left:92.50px;top:3.39px;font-size:14.6px;line-height:16.78px;color:#1a1a1a;transform:scaleX(0.9108);transform-origin:0 0;">MEDICAL PANIC ALARM</div>
<div class="b" style="left:442.00px;top:2.90px;width:14.8px;height:14.8px;background:#fff;border:1.4px solid #757575;border-radius:1px;"></div>
<svg style="left:442.00px;top:2.90px" width="15" height="15"><path d="M3.5 8 L6.8 10.9 L11.8 3.9" stroke="#222" stroke-width="2.3" fill="none"/></svg>
<div class="b" style="left:489.55px;top:2.90px;width:14.8px;height:14.8px;background:#fff;border:1.4px solid #757575;border-radius:1px;"></div>
<div class="b" style="left:537.10px;top:2.90px;width:14.8px;height:14.8px;background:#fff;border:1.4px solid #757575;border-radius:1px;"></div>
<svg style="left:537.10px;top:2.90px" width="15" height="15"><path d="M3.5 8 L6.8 10.9 L11.8 3.9" stroke="#222" stroke-width="2.3" fill="none"/></svg>
<div class="b" style="left:584.65px;top:2.90px;width:14.8px;height:14.8px;background:#fff;border:1.4px solid #757575;border-radius:1px;"></div>
<div class="b" style="left:632.20px;top:2.90px;width:14.8px;height:14.8px;background:#fff;border:1.4px solid #757575;border-radius:1px;"></div>
<svg style="left:632.20px;top:2.90px" width="15" height="15"><path d="M3.5 8 L6.8 10.9 L11.8 3.9" stroke="#222" stroke-width="2.3" fill="none"/></svg>
<div class="b" style="left:679.75px;top:2.90px;width:14.8px;height:14.8px;background:#fff;border:1.4px solid #757575;border-radius:1px;"></div>
<div class="b" style="left:727.30px;top:2.90px;width:14.8px;height:14.8px;background:#fff;border:1.4px solid #757575;border-radius:1px;"></div>
<svg style="left:727.30px;top:2.90px" width="15" height="15"><path d="M3.5 8 L6.8 10.9 L11.8 3.9" stroke="#222" stroke-width="2.3" fill="none"/></svg>
<div class="b" style="left:774.85px;top:2.90px;width:14.8px;height:14.8px;background:#fff;border:1.4px solid #757575;border-radius:1px;"></div>
<div class="b" style="left:0;top:23.55px;width:805.50px;height:23.55px;background:#ebebeb;border-top:1.5px solid #bdbdbd;"></div>
<div class="b" style="left:28.50px;top:24.55px;width:1.5px;height:23.55px;background:#3a3a3a;"></div>
<div class="b" style="left:88.00px;top:24.55px;width:1.5px;height:23.55px;background:#3a3a3a;"></div>
<div class="b" style="left:425.10px;top:24.55px;width:1.5px;height:23.55px;background:#3a3a3a;"></div>
<div class="b" style="left:472.65px;top:24.55px;width:1.5px;height:23.55px;background:#3a3a3a;"></div>
<div class="b" style="left:520.20px;top:24.55px;width:1.5px;height:23.55px;background:#3a3a3a;"></div>
<div class="b" style="left:567.75px;top:24.55px;width:1.5px;height:23.55px;background:#3a3a3a;"></div>
<div class="b" style="left:615.30px;top:24.55px;width:1.5px;height:23.55px;background:#3a3a3a;"></div>
<div class="b" style="left:662.85px;top:24.55px;width:1.5px;height:23.55px;background:#3a3a3a;"></div>
<div class="b" style="left:710.40px;top:24.55px;width:1.5px;height:23.55px;background:#3a3a3a;"></div>
<div class="b" style="left:757.95px;top:24.55px;width:1.5px;height:23.55px;background:#3a3a3a;"></div>
<div class="b" style="left:805.50px;top:24.55px;width:1.5px;height:23.55px;background:#3a3a3a;"></div>
<div class="t" style="left:3.50px;top:26.94px;font-size:14.6px;line-height:16.78px;color:#1a1a1a;transform:scaleX(1.0000);transform-origin:0 0;">2</div>
<div class="t" style="left:33.00px;top:26.94px;font-size:14.6px;line-height:16.78px;color:#1a1a1a;transform:scaleX(0.8506);transform-origin:0 0;">E110</div>
<div class="t" style="left:92.50px;top:26.94px;font-size:14.6px;line-height:16.78px;color:#1a1a1a;transform:scaleX(0.8835);transform-origin:0 0;">FIRE PANIC ALARM</div>
<div class="b" style="left:442.00px;top:26.45px;width:14.8px;height:14.8px;background:#fff;border:1.4px solid #757575;border-radius:1px;"></div>
<svg style="left:442.00px;top:26.45px" width="15" height="15"><path d="M3.5 8 L6.8 10.9 L11.8 3.9" stroke="#222" stroke-width="2.3" fill="none"/></svg>
<div class="b" style="left:489.55px;top:26.45px;width:14.8px;height:14.8px;background:#fff;border:1.4px solid #757575;border-radius:1px;"></div>
<div class="b" style="left:537.10px;top:26.45px;width:14.8px;height:14.8px;background:#fff;border:1.4px solid #757575;border-radius:1px;"></div>
<svg style="left:537.10px;top:26.45px" width="15" height="15"><path d="M3.5 8 L6.8 10.9 L11.8 3.9" stroke="#222" stroke-width="2.3" fill="none"/></svg>
<div class="b" style="left:584.65px;top:26.45px;width:14.8px;height:14.8px;background:#fff;border:1.4px solid #757575;border-radius:1px;"></div>
<div class="b" style="left:632.20px;top:26.45px;width:14.8px;height:14.8px;background:#fff;border:1.4px solid #757575;border-radius:1px;"></div>
<svg style="left:632.20px;top:26.45px" width="15" height="15"><path d="M3.5 8 L6.8 10.9 L11.8 3.9" stroke="#222" stroke-width="2.3" fill="none"/></svg>
<div class="b" style="left:679.75px;top:26.45px;width:14.8px;height:14.8px;background:#fff;border:1.4px solid #757575;border-radius:1px;"></div>
<div class="b" style="left:727.30px;top:26.45px;width:14.8px;height:14.8px;background:#fff;border:1.4px solid #757575;border-radius:1px;"></div>
<svg style="left:727.30px;top:26.45px" width="15" height="15"><path d="M3.5 8 L6.8 10.9 L11.8 3.9" stroke="#222" stroke-width="2.3" fill="none"/></svg>
<div class="b" style="left:774.85px;top:26.45px;width:14.8px;height:14.8px;background:#fff;border:1.4px solid #757575;border-radius:1px;"></div>
<div class="b" style="left:0;top:47.10px;width:805.50px;height:23.55px;background:#ffffff;border-top:1.5px solid #bdbdbd;"></div>
<div class="b" style="left:28.50px;top:48.10px;width:1.5px;height:23.55px;background:#3a3a3a;"></div>
<div class="b" style="left:88.00px;top:48.10px;width:1.5px;height:23.55px;background:#3a3a3a;"></div>
<div class="b" style="left:425.10px;top:48.10px;width:1.5px;height:23.55px;background:#3a3a3a;"></div>
<div class="b" style="left:472.65px;top:48.10px;width:1.5px;height:23.55px;background:#3a3a3a;"></div>
<div class="b" style="left:520.20px;top:48.10px;width:1.5px;height:23.55px;background:#3a3a3a;"></div>
<div class="b" style="left:567.75px;top:48.10px;width:1.5px;height:23.55px;background:#3a3a3a;"></div>
<div class="b" style="left:615.30px;top:48.10px;width:1.5px;height:23.55px;background:#3a3a3a;"></div>
<div class="b" style="left:662.85px;top:48.10px;width:1.5px;height:23.55px;background:#3a3a3a;"></div>
<div class="b" style="left:710.40px;top:48.10px;width:1.5px;height:23.55px;background:#3a3a3a;"></div>
<div class="b" style="left:757.95px;top:48.10px;width:1.5px;height:23.55px;background:#3a3a3a;"></div>
<div class="b" style="left:805.50px;top:48.10px;width:1.5px;height:23.55px;background:#3a3a3a;"></div>
<div class="t" style="left:3.50px;top:50.49px;font-size:14.6px;line-height:16.78px;color:#1a1a1a;transform:scaleX(1.0000);transform-origin:0 0;">3</div>
<div class="t" style="left:33.00px;top:50.49px;font-size:14.6px;line-height:16.78px;color:#1a1a1a;transform:scaleX(0.8506);transform-origin:0 0;">E120</div>
<div class="t" style="left:92.50px;top:50.49px;font-size:14.6px;line-height:16.78px;color:#1a1a1a;transform:scaleX(0.9090);transform-origin:0 0;">PANIC ALARM</div>
<div class="b" style="left:442.00px;top:50.00px;width:14.8px;height:14.8px;background:#fff;border:1.4px solid #757575;border-radius:1px;"></div>
<svg style="left:442.00px;top:50.00px" width="15" height="15"><path d="M3.5 8 L6.8 10.9 L11.8 3.9" stroke="#222" stroke-width="2.3" fill="none"/></svg>
<div class="b" style="left:489.55px;top:50.00px;width:14.8px;height:14.8px;background:#fff;border:1.4px solid #757575;border-radius:1px;"></div>
<div class="b" style="left:537.10px;top:50.00px;width:14.8px;height:14.8px;background:#fff;border:1.4px solid #757575;border-radius:1px;"></div>
<svg style="left:537.10px;top:50.00px" width="15" height="15"><path d="M3.5 8 L6.8 10.9 L11.8 3.9" stroke="#222" stroke-width="2.3" fill="none"/></svg>
<div class="b" style="left:584.65px;top:50.00px;width:14.8px;height:14.8px;background:#fff;border:1.4px solid #757575;border-radius:1px;"></div>
<div class="b" style="left:632.20px;top:50.00px;width:14.8px;height:14.8px;background:#fff;border:1.4px solid #757575;border-radius:1px;"></div>
<svg style="left:632.20px;top:50.00px" width="15" height="15"><path d="M3.5 8 L6.8 10.9 L11.8 3.9" stroke="#222" stroke-width="2.3" fill="none"/></svg>
<div class="b" style="left:679.75px;top:50.00px;width:14.8px;height:14.8px;background:#fff;border:1.4px solid #757575;border-radius:1px;"></div>
<div class="b" style="left:727.30px;top:50.00px;width:14.8px;height:14.8px;background:#fff;border:1.4px solid #757575;border-radius:1px;"></div>
<svg style="left:727.30px;top:50.00px" width="15" height="15"><path d="M3.5 8 L6.8 10.9 L11.8 3.9" stroke="#222" stroke-width="2.3" fill="none"/></svg>
<div class="b" style="left:774.85px;top:50.00px;width:14.8px;height:14.8px;background:#fff;border:1.4px solid #757575;border-radius:1px;"></div>
<div class="b" style="left:0;top:70.65px;width:805.50px;height:23.55px;background:#ffffff;border-top:1.5px solid #bdbdbd;"></div>
<div class="b" style="left:28.50px;top:71.65px;width:1.5px;height:23.55px;background:#3a3a3a;"></div>
<div class="b" style="left:88.00px;top:71.65px;width:1.5px;height:23.55px;background:#3a3a3a;"></div>
<div class="b" style="left:425.10px;top:71.65px;width:1.5px;height:23.55px;background:#3a3a3a;"></div>
<div class="b" style="left:472.65px;top:71.65px;width:1.5px;height:23.55px;background:#3a3a3a;"></div>
<div class="b" style="left:520.20px;top:71.65px;width:1.5px;height:23.55px;background:#3a3a3a;"></div>
<div class="b" style="left:567.75px;top:71.65px;width:1.5px;height:23.55px;background:#3a3a3a;"></div>
<div class="b" style="left:615.30px;top:71.65px;width:1.5px;height:23.55px;background:#3a3a3a;"></div>
<div class="b" style="left:662.85px;top:71.65px;width:1.5px;height:23.55px;background:#3a3a3a;"></div>
<div class="b" style="left:710.40px;top:71.65px;width:1.5px;height:23.55px;background:#3a3a3a;"></div>
<div class="b" style="left:757.95px;top:71.65px;width:1.5px;height:23.55px;background:#3a3a3a;"></div>
<div class="b" style="left:805.50px;top:71.65px;width:1.5px;height:23.55px;background:#3a3a3a;"></div>
<div class="t" style="left:3.50px;top:74.04px;font-size:14.6px;line-height:16.78px;color:#1a1a1a;transform:scaleX(1.0000);transform-origin:0 0;">4</div>
<div class="t" style="left:33.00px;top:74.04px;font-size:14.6px;line-height:16.78px;color:#1a1a1a;transform:scaleX(0.8506);transform-origin:0 0;">E121</div>
<div class="t" style="left:92.50px;top:74.04px;font-size:14.6px;line-height:16.78px;color:#1a1a1a;transform:scaleX(0.8698);transform-origin:0 0;">DURESS ALARM</div>
<div class="b" style="left:442.00px;top:73.55px;width:14.8px;height:14.8px;background:#fff;border:1.4px solid #757575;border-radius:1px;"></div>
<svg style="left:442.00px;top:73.55px" width="15" height="15"><path d="M3.5 8 L6.8 10.9 L11.8 3.9" stroke="#222" stroke-width="2.3" fill="none"/></svg>
<div class="b" style="left:489.55px;top:73.55px;width:14.8px;height:14.8px;background:#fff;border:1.4px solid #757575;border-radius:1px;"></div>
<div class="b" style="left:537.10px;top:73.55px;width:14.8px;height:14.8px;background:#fff;border:1.4px solid #757575;border-radius:1px;"></div>
<svg style="left:537.10px;top:73.55px" width="15" height="15"><path d="M3.5 8 L6.8 10.9 L11.8 3.9" stroke="#222" stroke-width="2.3" fill="none"/></svg>
<div class="b" style="left:584.65px;top:73.55px;width:14.8px;height:14.8px;background:#fff;border:1.4px solid #757575;border-radius:1px;"></div>
<div class="b" style="left:632.20px;top:73.55px;width:14.8px;height:14.8px;background:#fff;border:1.4px solid #757575;border-radius:1px;"></div>
<svg style="left:632.20px;top:73.55px" width="15" height="15"><path d="M3.5 8 L6.8 10.9 L11.8 3.9" stroke="#222" stroke-width="2.3" fill="none"/></svg>
<div class="b" style="left:679.75px;top:73.55px;width:14.8px;height:14.8px;background:#fff;border:1.4px solid #757575;border-radius:1px;"></div>
<div class="b" style="left:727.30px;top:73.55px;width:14.8px;height:14.8px;background:#fff;border:1.4px solid #757575;border-radius:1px;"></div>
<svg style="left:727.30px;top:73.55px" width="15" height="15"><path d="M3.5 8 L6.8 10.9 L11.8 3.9" stroke="#222" stroke-width="2.3" fill="none"/></svg>
<div class="b" style="left:774.85px;top:73.55px;width:14.8px;height:14.8px;background:#fff;border:1.4px solid #757575;border-radius:1px;"></div>
<div class="b" style="left:0;top:94.20px;width:805.50px;height:23.55px;background:#ffffff;border-top:1.5px solid #bdbdbd;"></div>
<div class="b" style="left:28.50px;top:95.20px;width:1.5px;height:23.55px;background:#3a3a3a;"></div>
<div class="b" style="left:88.00px;top:95.20px;width:1.5px;height:23.55px;background:#3a3a3a;"></div>
<div class="b" style="left:425.10px;top:95.20px;width:1.5px;height:23.55px;background:#3a3a3a;"></div>
<div class="b" style="left:472.65px;top:95.20px;width:1.5px;height:23.55px;background:#3a3a3a;"></div>
<div class="b" style="left:520.20px;top:95.20px;width:1.5px;height:23.55px;background:#3a3a3a;"></div>
<div class="b" style="left:567.75px;top:95.20px;width:1.5px;height:23.55px;background:#3a3a3a;"></div>
<div class="b" style="left:615.30px;top:95.20px;width:1.5px;height:23.55px;background:#3a3a3a;"></div>
<div class="b" style="left:662.85px;top:95.20px;width:1.5px;height:23.55px;background:#3a3a3a;"></div>
<div class="b" style="left:710.40px;top:95.20px;width:1.5px;height:23.55px;background:#3a3a3a;"></div>
<div class="b" style="left:757.95px;top:95.20px;width:1.5px;height:23.55px;background:#3a3a3a;"></div>
<div class="b" style="left:805.50px;top:95.20px;width:1.5px;height:23.55px;background:#3a3a3a;"></div>
<div class="t" style="left:3.50px;top:97.59px;font-size:14.6px;line-height:16.78px;color:#1a1a1a;transform:scaleX(1.0000);transform-origin:0 0;">5</div>
<div class="t" style="left:33.00px;top:97.59px;font-size:14.6px;line-height:16.78px;color:#1a1a1a;transform:scaleX(0.8506);transform-origin:0 0;">E130</div>
<div class="t" style="left:92.50px;top:97.59px;font-size:14.6px;line-height:16.78px;color:#1a1a1a;transform:scaleX(0.9471);transform-origin:0 0;">ALARM !!! ALARM !!! ALARM !!! ALARM !!!</div>
<div class="b" style="left:442.00px;top:97.10px;width:14.8px;height:14.8px;background:#fff;border:1.4px solid #757575;border-radius:1px;"></div>
<svg style="left:442.00px;top:97.10px" width="15" height="15"><path d="M3.5 8 L6.8 10.9 L11.8 3.9" stroke="#222" stroke-width="2.3" fill="none"/></svg>
<div class="b" style="left:489.55px;top:97.10px;width:14.8px;height:14.8px;background:#fff;border:1.4px solid #757575;border-radius:1px;"></div>
<div class="b" style="left:537.10px;top:97.10px;width:14.8px;height:14.8px;background:#fff;border:1.4px solid #757575;border-radius:1px;"></div>
<svg style="left:537.10px;top:97.10px" width="15" height="15"><path d="M3.5 8 L6.8 10.9 L11.8 3.9" stroke="#222" stroke-width="2.3" fill="none"/></svg>
<div class="b" style="left:584.65px;top:97.10px;width:14.8px;height:14.8px;background:#fff;border:1.4px solid #757575;border-radius:1px;"></div>
<div class="b" style="left:632.20px;top:97.10px;width:14.8px;height:14.8px;background:#fff;border:1.4px solid #757575;border-radius:1px;"></div>
<svg style="left:632.20px;top:97.10px" width="15" height="15"><path d="M3.5 8 L6.8 10.9 L11.8 3.9" stroke="#222" stroke-width="2.3" fill="none"/></svg>
<div class="b" style="left:679.75px;top:97.10px;width:14.8px;height:14.8px;background:#fff;border:1.4px solid #757575;border-radius:1px;"></div>
<div class="b" style="left:727.30px;top:97.10px;width:14.8px;height:14.8px;background:#fff;border:1.4px solid #757575;border-radius:1px;"></div>
<svg style="left:727.30px;top:97.10px" width="15" height="15"><path d="M3.5 8 L6.8 10.9 L11.8 3.9" stroke="#222" stroke-width="2.3" fill="none"/></svg>
<div class="b" style="left:774.85px;top:97.10px;width:14.8px;height:14.8px;background:#fff;border:1.4px solid #757575;border-radius:1px;"></div>
<div class="b" style="left:0;top:117.75px;width:805.50px;height:23.55px;background:#ffffff;border-top:1.5px solid #bdbdbd;"></div>
<div class="b" style="left:28.50px;top:118.75px;width:1.5px;height:23.55px;background:#3a3a3a;"></div>
<div class="b" style="left:88.00px;top:118.75px;width:1.5px;height:23.55px;background:#3a3a3a;"></div>
<div class="b" style="left:425.10px;top:118.75px;width:1.5px;height:23.55px;background:#3a3a3a;"></div>
<div class="b" style="left:472.65px;top:118.75px;width:1.5px;height:23.55px;background:#3a3a3a;"></div>
<div class="b" style="left:520.20px;top:118.75px;width:1.5px;height:23.55px;background:#3a3a3a;"></div>
<div class="b" style="left:567.75px;top:118.75px;width:1.5px;height:23.55px;background:#3a3a3a;"></div>
<div class="b" style="left:615.30px;top:118.75px;width:1.5px;height:23.55px;background:#3a3a3a;"></div>
<div class="b" style="left:662.85px;top:118.75px;width:1.5px;height:23.55px;background:#3a3a3a;"></div>
<div class="b" style="left:710.40px;top:118.75px;width:1.5px;height:23.55px;background:#3a3a3a;"></div>
<div class="b" style="left:757.95px;top:118.75px;width:1.5px;height:23.55px;background:#3a3a3a;"></div>
<div class="b" style="left:805.50px;top:118.75px;width:1.5px;height:23.55px;background:#3a3a3a;"></div>
<div class="t" style="left:3.50px;top:121.14px;font-size:14.6px;line-height:16.78px;color:#1a1a1a;transform:scaleX(1.0000);transform-origin:0 0;">6</div>
<div class="t" style="left:33.00px;top:121.14px;font-size:14.6px;line-height:16.78px;color:#1a1a1a;transform:scaleX(0.8506);transform-origin:0 0;">E301</div>
<div class="t" style="left:92.50px;top:121.14px;font-size:14.6px;line-height:16.78px;color:#1a1a1a;transform:scaleX(0.9598);transform-origin:0 0;">AC Power failure on control panel</div>
<div class="b" style="left:442.00px;top:120.65px;width:14.8px;height:14.8px;background:#fff;border:1.4px solid #757575;border-radius:1px;"></div>
<svg style="left:442.00px;top:120.65px" width="15" height="15"><path d="M3.5 8 L6.8 10.9 L11.8 3.9" stroke="#222" stroke-width="2.3" fill="none"/></svg>
<div class="b" style="left:489.55px;top:120.65px;width:14.8px;height:14.8px;background:#fff;border:1.4px solid #757575;border-radius:1px;"></div>
<div class="b" style="left:537.10px;top:120.65px;width:14.8px;height:14.8px;background:#fff;border:1.4px solid #757575;border-radius:1px;"></div>
<svg style="left:537.10px;top:120.65px" width="15" height="15"><path d="M3.5 8 L6.8 10.9 L11.8 3.9" stroke="#222" stroke-width="2.3" fill="none"/></svg>
<div class="b" style="left:584.65px;top:120.65px;width:14.8px;height:14.8px;background:#fff;border:1.4px solid #757575;border-radius:1px;"></div>
<div class="b" style="left:632.20px;top:120.65px;width:14.8px;height:14.8px;background:#fff;border:1.4px solid #757575;border-radius:1px;"></div>
<svg style="left:632.20px;top:120.65px" width="15" height="15"><path d="M3.5 8 L6.8 10.9 L11.8 3.9" stroke="#222" stroke-width="2.3" fill="none"/></svg>
<div class="b" style="left:679.75px;top:120.65px;width:14.8px;height:14.8px;background:#fff;border:1.4px solid #757575;border-radius:1px;"></div>
<div class="b" style="left:727.30px;top:120.65px;width:14.8px;height:14.8px;background:#fff;border:1.4px solid #757575;border-radius:1px;"></div>
<svg style="left:727.30px;top:120.65px" width="15" height="15"><path d="M3.5 8 L6.8 10.9 L11.8 3.9" stroke="#222" stroke-width="2.3" fill="none"/></svg>
<div class="b" style="left:774.85px;top:120.65px;width:14.8px;height:14.8px;background:#fff;border:1.4px solid #757575;border-radius:1px;"></div>
<div class="b" style="left:0;top:141.30px;width:805.50px;height:23.55px;background:#ffffff;border-top:1.5px solid #bdbdbd;"></div>
<div class="b" style="left:28.50px;top:142.30px;width:1.5px;height:23.55px;background:#3a3a3a;"></div>
<div class="b" style="left:88.00px;top:142.30px;width:1.5px;height:23.55px;background:#3a3a3a;"></div>
<div class="b" style="left:425.10px;top:142.30px;width:1.5px;height:23.55px;background:#3a3a3a;"></div>
<div class="b" style="left:472.65px;top:142.30px;width:1.5px;height:23.55px;background:#3a3a3a;"></div>
<div class="b" style="left:520.20px;top:142.30px;width:1.5px;height:23.55px;background:#3a3a3a;"></div>
<div class="b" style="left:567.75px;top:142.30px;width:1.5px;height:23.55px;background:#3a3a3a;"></div>
<div class="b" style="left:615.30px;top:142.30px;width:1.5px;height:23.55px;background:#3a3a3a;"></div>
<div class="b" style="left:662.85px;top:142.30px;width:1.5px;height:23.55px;background:#3a3a3a;"></div>
<div class="b" style="left:710.40px;top:142.30px;width:1.5px;height:23.55px;background:#3a3a3a;"></div>
<div class="b" style="left:757.95px;top:142.30px;width:1.5px;height:23.55px;background:#3a3a3a;"></div>
<div class="b" style="left:805.50px;top:142.30px;width:1.5px;height:23.55px;background:#3a3a3a;"></div>
<div class="t" style="left:3.50px;top:144.69px;font-size:14.6px;line-height:16.78px;color:#1a1a1a;transform:scaleX(1.0000);transform-origin:0 0;">7</div>
<div class="b" style="left:442.00px;top:144.20px;width:14.8px;height:14.8px;background:#fff;border:1.4px solid #757575;border-radius:1px;"></div>
<svg style="left:442.00px;top:144.20px" width="15" height="15"><path d="M3.5 8 L6.8 10.9 L11.8 3.9" stroke="#222" stroke-width="2.3" fill="none"/></svg>
<div class="b" style="left:489.55px;top:144.20px;width:14.8px;height:14.8px;background:#fff;border:1.4px solid #757575;border-radius:1px;"></div>
<div class="b" style="left:537.10px;top:144.20px;width:14.8px;height:14.8px;background:#fff;border:1.4px solid #757575;border-radius:1px;"></div>
<svg style="left:537.10px;top:144.20px" width="15" height="15"><path d="M3.5 8 L6.8 10.9 L11.8 3.9" stroke="#222" stroke-width="2.3" fill="none"/></svg>
<div class="b" style="left:584.65px;top:144.20px;width:14.8px;height:14.8px;background:#fff;border:1.4px solid #757575;border-radius:1px;"></div>
<div class="b" style="left:632.20px;top:144.20px;width:14.8px;height:14.8px;background:#fff;border:1.4px solid #757575;border-radius:1px;"></div>
<svg style="left:632.20px;top:144.20px" width="15" height="15"><path d="M3.5 8 L6.8 10.9 L11.8 3.9" stroke="#222" stroke-width="2.3" fill="none"/></svg>
<div class="b" style="left:679.75px;top:144.20px;width:14.8px;height:14.8px;background:#fff;border:1.4px solid #757575;border-radius:1px;"></div>
<div class="b" style="left:727.30px;top:144.20px;width:14.8px;height:14.8px;background:#fff;border:1.4px solid #757575;border-radius:1px;"></div>
<svg style="left:727.30px;top:144.20px" width="15" height="15"><path d="M3.5 8 L6.8 10.9 L11.8 3.9" stroke="#222" stroke-width="2.3" fill="none"/></svg>
<div class="b" style="left:774.85px;top:144.20px;width:14.8px;height:14.8px;background:#fff;border:1.4px solid #757575;border-radius:1px;"></div>
</div>
<div class="b" style="left:1053.20px;top:508.50px;width:1.30px;height:131.50px;background:#3a3a3a;"></div>
<div class="b" style="left:1054.70px;top:508.50px;width:19.80px;height:131.50px;background:#f0f0f0;"></div>
<div class="b" style="left:1055.20px;top:509.20px;width:19.30px;height:19.10px;background:#5f93c4;border:1px solid #9dbcd8;"></div>
<svg style="left:1059.85px;top:517.25px" width="10" height="5"><path d="M0 5 L5 0 L10 5 Z" fill="#2b4874"/></svg>
<div class="b" style="left:1054.20px;top:530.30px;width:20.80px;height:18.10px;background:#c9e2f2;border:1px solid #86a8c8;border-left:1.5px solid #3d5f86;border-right:1.5px solid #5d7fa6;border-radius:2px;"></div>
<div class="b" style="left:1058.70px;top:535.30px;width:11.80px;height:1.10px;background:#98a4ae;"></div>
<div class="b" style="left:1058.70px;top:537.40px;width:11.80px;height:1.10px;background:#98a4ae;"></div>
<div class="b" style="left:1058.70px;top:539.50px;width:11.80px;height:1.10px;background:#98a4ae;"></div>
<div class="b" style="left:1058.70px;top:541.60px;width:11.80px;height:1.10px;background:#98a4ae;"></div>
<div class="b" style="left:1055.20px;top:632.50px;width:19.30px;height:7.50px;background:#5f93c4;border:1px solid #9dbcd8;border-bottom:none;"></div>
</div></body></html>
